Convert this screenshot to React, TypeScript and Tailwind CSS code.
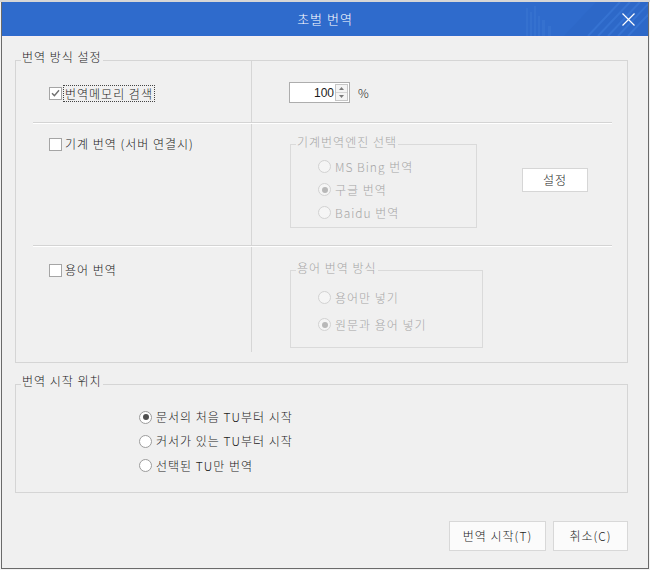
import clsx from "clsx";

function Radio({ checked, disabled }: { checked?: boolean; disabled?: boolean }) {
  return (
    <span
      className={clsx(
        "flex h-[13px] w-[13px] shrink-0 items-center justify-center rounded-full border",
        disabled ? "border-[#d2d2d2] bg-[#f5f5f5]" : "border-[#9c9c9c] bg-white"
      )}
    >
      {checked && (
        <span
          className={clsx(
            "h-[6px] w-[6px] rounded-full",
            disabled ? "bg-[#b8b8b8]" : "bg-[#505050]"
          )}
        />
      )}
    </span>
  );
}

function Checkbox({ checked }: { checked?: boolean }) {
  return (
    <span className="flex h-[13px] w-[13px] shrink-0 items-center justify-center border border-[#a5a5a5] bg-white">
      {checked && (
        <svg width="9" height="8" viewBox="0 0 9 8">
          <path d="M1 4.2 L3.4 6.6 L8 1.2" stroke="#707070" strokeWidth="1.4" fill="none" />
        </svg>
      )}
    </span>
  );
}

function RadioRow({
  label,
  checked,
  disabled,
  h,
}: {
  label: string;
  checked?: boolean;
  disabled?: boolean;
  h: string;
}) {
  return (
    <div className={clsx("flex items-center gap-[4px]", h)}>
      <Radio checked={checked} disabled={disabled} />
      <span className={disabled ? "text-[#a6a6a6]" : "text-[#1b1b1b]"}>{label}</span>
    </div>
  );
}

function Divider() {
  return <div className="h-[2px] border-t border-b border-t-[#d4d4d4] border-b-white" />;
}

export default function App() {
  return (
    <div className="h-[570px] w-[650px] overflow-hidden bg-[#f3f3f3] font-['Noto_Sans_CJK_KR','Malgun_Gothic',sans-serif] text-[12px] font-light tracking-[1px] text-[#1b1b1b]">
      {/* strip of the window behind */}
      <div className="h-[2px] bg-[#d6d6d6]" />

      <div className="ml-[1px] flex h-[567px] w-[648px] flex-col border-x border-b border-[#6a6a6a] bg-[#f0f0f0]">
        {/* Title bar */}
        <div className="relative flex h-[34px] shrink-0 items-center justify-center bg-[#2f6bcc] text-white">
          <svg
            className="absolute right-0 top-0"
            width="122"
            height="34"
            viewBox="0 0 122 34"
          >
            <g fill="#3571cf">
              <rect x="0" y="6" width="2" height="28" />
              <rect x="4" y="10" width="2" height="24" />
              <rect x="8" y="4" width="2" height="30" />
              <rect x="12" y="14" width="2" height="20" />
              <rect x="16" y="18" width="3" height="16" />
              <rect x="22" y="24" width="3" height="10" />
              <polygon points="38,34 70,0 122,0 122,34" fill="#2d68c8" />
            </g>
            <g stroke="#3673d2" strokeWidth="2">
              <line x1="62" y1="34" x2="94" y2="0" />
              <line x1="72" y1="34" x2="104" y2="0" />
              <line x1="82" y1="34" x2="114" y2="0" />
              <line x1="92" y1="34" x2="124" y2="0" />
              <line x1="102" y1="34" x2="134" y2="0" />
            </g>
          </svg>
          <span className="relative text-[13px]">초벌 번역</span>
          <svg
            className="absolute right-[13px] top-[11px]"
            width="13"
            height="13"
            viewBox="0 0 13 13"
          >
            <path d="M0.5 0.5 L12.5 12.5 M12.5 0.5 L0.5 12.5" stroke="white" strokeWidth="1.2" />
          </svg>
        </div>
        <div className="h-px bg-[#f7eef2]" />

        {/* Body */}
        <div className="flex flex-1 flex-col pl-[13px]">
          {/* Group 1 */}
          <fieldset className="mt-[12px] h-[314px] w-[613px] border border-[#d5d5d5]">
            <legend className="ml-[5px] px-[1px] pb-[6px] leading-[16px]">번역 방식 설정</legend>
            <div className="-mt-[10px] ml-[17px] w-[579px]">
              {/* Row 1 */}
              <div className="flex h-[61px]">
                <div className="w-[219px] border-r border-[#d6d6d6] pl-[16px] pt-[23px]">
                  <div className="flex h-[18px] items-center">
                    <Checkbox checked />
                    <span className="ml-[1px] border border-dotted border-[#444] px-[1px] leading-[15px]">
                      번역메모리 검색
                    </span>
                  </div>
                </div>
                <div className="flex flex-1 items-start pl-[37px] pt-[21px]">
                  <div className="flex h-[21px] w-[61px] items-center justify-end border border-[#adadad] bg-white pr-[1px]">
                    <span className="mr-[1px] font-['Liberation_Sans_Narrow','Liberation_Sans',sans-serif] tracking-normal leading-none">
                      100
                    </span>
                    <div className="flex h-[17px] w-[13px] flex-col border border-[#c6c6c6] bg-[#f4f4f4]">
                      <div className="flex flex-1 items-center justify-center border-b border-[#d4d4d4]">
                        <svg width="5" height="3" viewBox="0 0 5 3">
                          <path d="M0 3 L2.5 0 L5 3 Z" fill="#7a7a7a" />
                        </svg>
                      </div>
                      <div className="flex flex-1 items-center justify-center">
                        <svg width="5" height="3" viewBox="0 0 5 3">
                          <path d="M0 0 L2.5 3 L5 0 Z" fill="#7a7a7a" />
                        </svg>
                      </div>
                    </div>
                  </div>
                  <span className="ml-[8px] leading-[21px]">%</span>
                </div>
              </div>
              <Divider />

              {/* Row 2 */}
              <div className="flex h-[121px]">
                <div className="w-[219px] border-r border-[#d6d6d6] pl-[16px] pt-[11px]">
                  <div className="flex h-[18px] items-center">
                    <Checkbox />
                    <span className="ml-[3px]">기계 번역 (서버 연결시)</span>
                  </div>
                </div>
                <div className="flex flex-1 items-start pl-[38px]">
                  <fieldset className="mt-[10px] h-[94px] w-[187px] border border-[#dadada]">
                    <legend className="ml-[5px] px-[1px] pb-[4px] leading-[16px] text-[#a6a6a6]">
                      기계번역엔진 선택
                    </legend>
                    <div className="pl-[27px] pt-[1px]">
                      <RadioRow label="MS Bing 번역" disabled h="h-[23px]" />
                      <RadioRow label="구글 번역" checked disabled h="h-[23px]" />
                      <RadioRow label="Baidu 번역" disabled h="h-[23px]" />
                    </div>
                  </fieldset>
                  <button className="ml-[45px] mt-[44px] h-[24px] w-[66px] border border-[#d6d6d6] bg-white text-[12px] text-[#1b1b1b]">
                    설정
                  </button>
                </div>
              </div>
              <Divider />

              {/* Row 3 */}
              <div className="flex h-[105px]">
                <div className="w-[219px] border-r border-[#d6d6d6] pl-[16px] pt-[14px]">
                  <div className="flex h-[18px] items-center">
                    <Checkbox />
                    <span className="ml-[3px]">용어 번역</span>
                  </div>
                </div>
                <div className="flex flex-1 items-start pl-[38px]">
                  <fieldset className="mt-[13px] h-[88px] w-[193px] border border-[#dadada]">
                    <legend className="ml-[5px] px-[1px] pb-[4px] leading-[16px] text-[#a6a6a6]">
                      용어 번역 방식
                    </legend>
                    <div className="pl-[27px] pt-[4px]">
                      <RadioRow label="용어만 넣기" disabled h="h-[27px]" />
                      <RadioRow label="원문과 용어 넣기" checked disabled h="h-[27px]" />
                    </div>
                  </fieldset>
                </div>
              </div>
            </div>
          </fieldset>

          {/* Group 2 */}
          <fieldset className="mt-[10px] h-[120px] w-[613px] border border-[#d5d5d5]">
            <legend className="ml-[5px] px-[1px] pb-[6px] leading-[16px]">번역 시작 위치</legend>
            <div className="pl-[123px] pt-[10px]">
              <RadioRow label="문서의 처음 TU부터 시작" checked h="h-[24px]" />
              <RadioRow label="커서가 있는 TU부터 시작" h="h-[24px]" />
              <RadioRow label="선택된 TU만 번역" h="h-[25px]" />
            </div>
          </fieldset>

          {/* Buttons */}
          <div className="mt-[28px] flex w-[613px] justify-end gap-[7px]">
            <button className="h-[30px] w-[97px] border border-[#d8d8d8] bg-[#fbfbfb] text-[12px] text-[#1b1b1b]">
              번역 시작(T)
            </button>
            <button className="h-[30px] w-[75px] border border-[#d8d8d8] bg-[#fbfbfb] text-[12px] text-[#1b1b1b]">
              취소(C)
            </button>
          </div>
        </div>
      </div>
    </div>
  );
}
